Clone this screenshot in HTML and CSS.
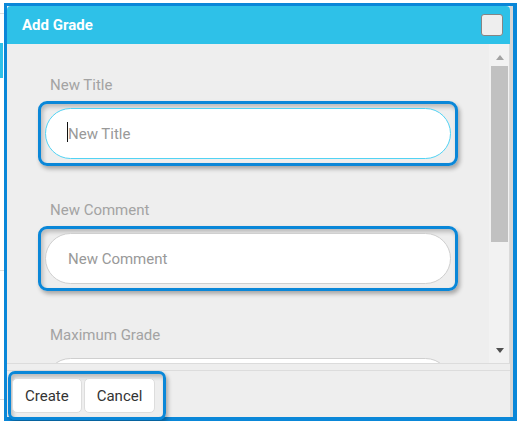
FILE: index.html
```html
<!DOCTYPE html>
<html>

<head>
    <meta content="width=device-width, initial-scale=1" name="viewport" />
    <link rel="stylesheet" href="styles.css">
</head>

<body>
    <div class="frame">
        <div class="dialog">
            <div class="titlebar">
                <span class="title">Add Grade</span>
                <button class="closeBtn" aria-label="close"></button>
            </div>
            <div class="content">
                <div class="scrollBody">
                    <div class="group">
                        <label class="fieldLabel">New Title</label>
                        <div class="mark">
                            <div class="inputWrap">
                                <input class="field focused" type="text" placeholder="New Title">
                                <span class="caret"></span>
                            </div>
                        </div>
                    </div>
                    <div class="group">
                        <label class="fieldLabel">New Comment</label>
                        <div class="mark">
                            <input class="field" type="text" placeholder="New Comment">
                        </div>
                    </div>
                    <div class="group">
                        <label class="fieldLabel">Maximum Grade</label>
                        <div class="mark plain">
                            <input class="field" type="text">
                        </div>
                    </div>
                </div>
                <div class="scrollbar">
                    <div class="arrowBtn"><span class="triUp"></span></div>
                    <div class="thumb"></div>
                    <div class="spacer"></div>
                    <div class="arrowBtn"><span class="triDown"></span></div>
                </div>
            </div>
            <div class="footer">
                <div class="mark btnMark">
                    <button class="footBtn">Create</button>
                    <button class="footBtn">Cancel</button>
                </div>
            </div>
        </div>
    </div>
</body>

</html>
```

FILE: styles.css
```css
html,
body {
    margin: 0;
    height: 100%;
    overflow: hidden;
}

body {
    font-family: Roboto, "Noto Sans", sans-serif;
    background:
        linear-gradient(#2ec1e8, #2ec1e8) 0 43px / 3px 35px no-repeat,
        linear-gradient(#dddddd, #dddddd) 0 13px / 4px 1px no-repeat,
        linear-gradient(#dddddd, #dddddd) 0 270px / 4px 1px no-repeat,
        linear-gradient(#dddddd, #dddddd) 0 399px / 4px 1px no-repeat,
        #ffffff;
}

/* the blue box round the whole dialog */
.frame {
    margin: 3px 0 0 4px;
    width: 506px;
    border-style: solid;
    border-color: #0a87d8;
    border-width: 3px 4px 4px 3px;
}

.dialog {
    display: flex;
    flex-direction: column;
    width: 503px;
    height: 411px;
    border-right: 3px solid #d6d6d6;
    background-color: #eeeeee;
}

.titlebar {
    height: 38px;
    flex-shrink: 0;
    display: flex;
    align-items: center;
    justify-content: space-between;
    padding: 0 7px 0 15px;
    background-color: #2ec1e8;
    border-radius: 4px 4px 0 0;
}

.title {
    color: #ffffff;
    font-weight: bold;
    font-size: 15px;
}

.closeBtn {
    width: 22px;
    height: 22px;
    padding: 0;
    background-color: #eeeeee;
    border: 1px solid #858585;
    border-radius: 3px;
}

.content {
    display: flex;
    flex-direction: row;
    height: 319px;
    flex-shrink: 0;
    border-bottom: 1px solid #dcdcdc;
}

.scrollBody {
    flex: 1;
    overflow: hidden;
    padding-top: 31px;
}

.group {
    margin-bottom: 34px;
}

.fieldLabel {
    display: block;
    padding-left: 43px;
    line-height: 20px;
    font-size: 15px;
    color: #a3a3a3;
}

/* blue highlight boxes */
.mark {
    margin: 6px 0 0 31px;
    width: 406px;
    padding: 4px;
    border: 3px solid #0a87d8;
    border-radius: 9px;
    box-shadow: 2px 3px 4px rgba(0, 0, 0, 0.3), inset 2px 3px 4px rgba(0, 0, 0, 0.22);
}

.mark.plain {
    border-color: transparent;
    box-shadow: none;
}

.inputWrap {
    position: relative;
}

.field {
    display: block;
    box-sizing: border-box;
    width: 406px;
    height: 51px;
    padding: 0 22px;
    border: 1px solid #cfcfcf;
    border-radius: 26px;
    background-color: #ffffff;
    font-family: Roboto, "Noto Sans", sans-serif;
    font-size: 15px;
    color: #333333;
    outline: none;
}

.field::placeholder {
    color: #999999;
}

.field.focused {
    border-color: #52d3f4;
}

.caret {
    position: absolute;
    left: 22px;
    top: 14px;
    width: 1px;
    height: 20px;
    background-color: #111111;
}

.scrollbar {
    width: 21px;
    display: flex;
    flex-direction: column;
    padding: 5px 0 4px 0;
    box-sizing: border-box;
    background-color: #f2f2f2;
    border-right: 1px solid #dadada;
}

.arrowBtn {
    height: 17px;
    display: flex;
    justify-content: center;
    align-items: center;
    padding-left: 1px;
}

.triUp {
    width: 0;
    height: 0;
    border-left: 4px solid transparent;
    border-right: 4px solid transparent;
    border-bottom: 5px solid #a3a3a3;
}

.triDown {
    width: 0;
    height: 0;
    border-left: 4px solid transparent;
    border-right: 4px solid transparent;
    border-top: 5px solid #505050;
}

.thumb {
    margin-left: 2px;
    width: 17px;
    height: 176px;
    background-color: #c1c1c1;
}

.spacer {
    flex: 1;
}

.footer {
    margin-top: 6px;
    border-top: 1px solid #dcdcdc;
    height: 46px;
    flex-shrink: 0;
}

.btnMark {
    margin: 0 0 0 1px;
    width: auto;
    display: inline-flex;
    gap: 2px;
    padding: 4px 8px 4px 1px;
    border-radius: 7px;
}

.footBtn {
    height: 35px;
    padding: 0 12px;
    background-color: #ffffff;
    border: 1px solid #dddddd;
    border-radius: 5px;
    font-family: Roboto, "Noto Sans", sans-serif;
    font-size: 15px;
    color: #333333;
}
```
